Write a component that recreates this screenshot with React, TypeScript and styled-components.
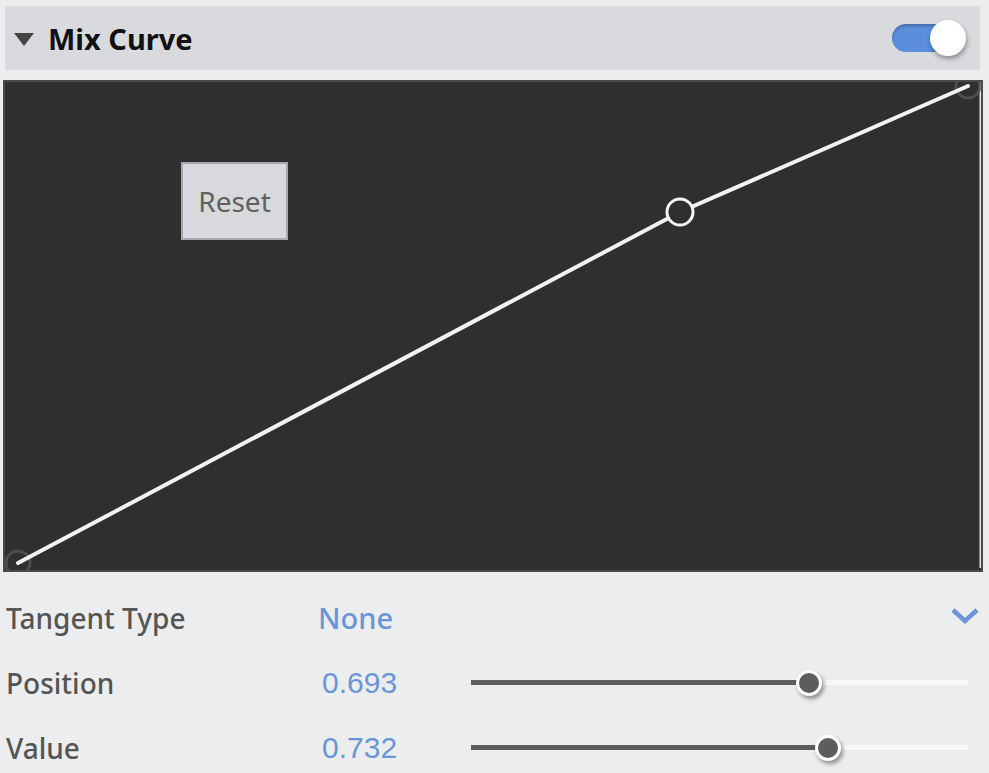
import React from "react";
import styled, { createGlobalStyle } from "styled-components";

const Global = createGlobalStyle`
  html, body { margin: 0; padding: 0; background: #ecedef; }
  body { font-family: "Noto Sans", "Open Sans", sans-serif; }
`;

const Page = styled.div`
  width: 989px;
  height: 773px;
  box-sizing: border-box;
  padding: 6px 6px 0 3px;
  display: flex;
  flex-direction: column;
  overflow: hidden;
  & > * { flex-shrink: 0; }
`;

const Header = styled.div`
  height: 64px;
  margin: 0 3px 0 2px;
  background: #d9dadd;
  display: flex;
  align-items: center;
  padding: 0 14px 0 9px;
  box-sizing: border-box;
`;

const Caret = styled.div`
  width: 0;
  height: 0;
  border-left: 10px solid transparent;
  border-right: 10px solid transparent;
  border-top: 13px solid #444;
  margin-right: 14px;
  margin-top: 2px;
`;

const Title = styled.div`
  font-weight: 700;
  font-size: 29px;
  color: #111;
  flex: 1;
`;

const Toggle = styled.div`
  position: relative;
  width: 74px;
  height: 36px;
  display: flex;
  align-items: center;
`;

const Track = styled.div`
  width: 66px;
  height: 28px;
  border-radius: 14px;
  background: #5b8edb;
  box-shadow: inset 0 2px 3px rgba(0, 0, 0, 0.25);
`;

const Knob = styled.div`
  position: absolute;
  right: 0;
  top: 0;
  width: 36px;
  height: 36px;
  border-radius: 50%;
  background: #fff;
  box-shadow: 1px 3px 5px rgba(0, 0, 0, 0.35);
`;

const CanvasBox = styled.div`
  position: relative;
  margin-top: 10px;
  height: 492px;
  width: 980px;
  box-sizing: border-box;
  border: 2px solid #4a4a4a;
  background: #2f2f2f;
`;

const CurveSvg = styled.svg`
  display: block;
  width: 100%;
  height: 100%;
`;

const ResetButton = styled.button`
  position: absolute;
  left: 176px;
  top: 80px;
  width: 107px;
  height: 78px;
  box-sizing: border-box;
  background: #d8d9dd;
  border: 2px solid #a7a8b0;
  color: #606060;
  font-family: "Noto Sans", "Open Sans", sans-serif;
  font-size: 28px;
  padding: 0;
  cursor: pointer;
`;

const Rows = styled.div`
  margin-top: 13px;
  display: flex;
  flex-direction: column;
`;

const Row = styled.div`
  height: 65px;
  display: grid;
  grid-template-columns: 312px 153px 1fr;
  align-items: center;
  padding-left: 3px;
`;

const Label = styled.div`
  font-size: 28px;
  font-weight: 500;
  color: #555;
`;

const Choice = styled.div`
  font-size: 29px;
  font-weight: 500;
  color: #6a96d8;
`;

const Num = styled.div`
  font-family: "Liberation Sans", Arial, sans-serif;
  font-size: 30px;
  color: #6a96d8;
  padding-left: 4px;
`;

const Chevron = styled.svg`
  justify-self: end;
  margin-right: 4px;
  margin-top: -4px;
`;

const Slider = styled.div`
  position: relative;
  height: 26px;
  width: 497px;
  display: flex;
  align-items: center;
`;

const SliderTrack = styled.div`
  width: 100%;
  height: 5px;
  background: #f8f8f8;
`;

const SliderFill = styled.div`
  height: 100%;
  background: #5d5d5d;
`;

const Thumb = styled.div`
  position: absolute;
  top: 0;
  width: 26px;
  height: 26px;
  margin-left: -13px;
  box-sizing: border-box;
  border-radius: 50%;
  background: #5d5d5d;
  border: 3px solid #fff;
  box-shadow: 2px 3px 4px rgba(0, 0, 0, 0.4);
`;

function SliderControl({ value }: { value: number }) {
  const pct = `${value * 100}%`;
  return (
    <Slider>
      <SliderTrack>
        <SliderFill style={{ width: pct }} />
      </SliderTrack>
      <Thumb style={{ left: pct }} />
    </Slider>
  );
}

export default function App() {
  return (
    <>
      <Global />
      <Page>
        <Header>
          <Caret />
          <Title>Mix Curve</Title>
          <Toggle>
            <Track />
            <Knob />
          </Toggle>
        </Header>
        <CanvasBox>
          <CurveSvg viewBox="0 0 976 488">
            <rect x="974.5" y="0" width="1.5" height="486" fill="#e8e8e8" />
            <circle cx="13" cy="481" r="12" fill="none" stroke="#555" strokeWidth="3" opacity="0.8" />
            <circle cx="963" cy="4" r="12" fill="none" stroke="#555" strokeWidth="3" opacity="0.8" />
            <polyline
              points="13,481 675,130 963,4"
              fill="none"
              stroke="#f2f2f2"
              strokeWidth="4"
              strokeLinecap="round"
            />
            <circle cx="675" cy="130" r="13" fill="#2f2f2f" stroke="#f4f4f4" strokeWidth="3" />
          </CurveSvg>
          <ResetButton>Reset</ResetButton>
        </CanvasBox>
        <Rows>
          <Row>
            <Label>Tangent Type</Label>
            <Choice>None</Choice>
            <Chevron width="28" height="18" viewBox="0 0 28 18">
              <path d="M2 3 L14 14 L26 3" fill="none" stroke="#6a96d8" strokeWidth="4.5" />
            </Chevron>
          </Row>
          <Row>
            <Label>Position</Label>
            <Num>0.693</Num>
            <SliderControl value={0.68} />
          </Row>
          <Row>
            <Label>Value</Label>
            <Num>0.732</Num>
            <SliderControl value={0.718} />
          </Row>
        </Rows>
      </Page>
    </>
  );
}
